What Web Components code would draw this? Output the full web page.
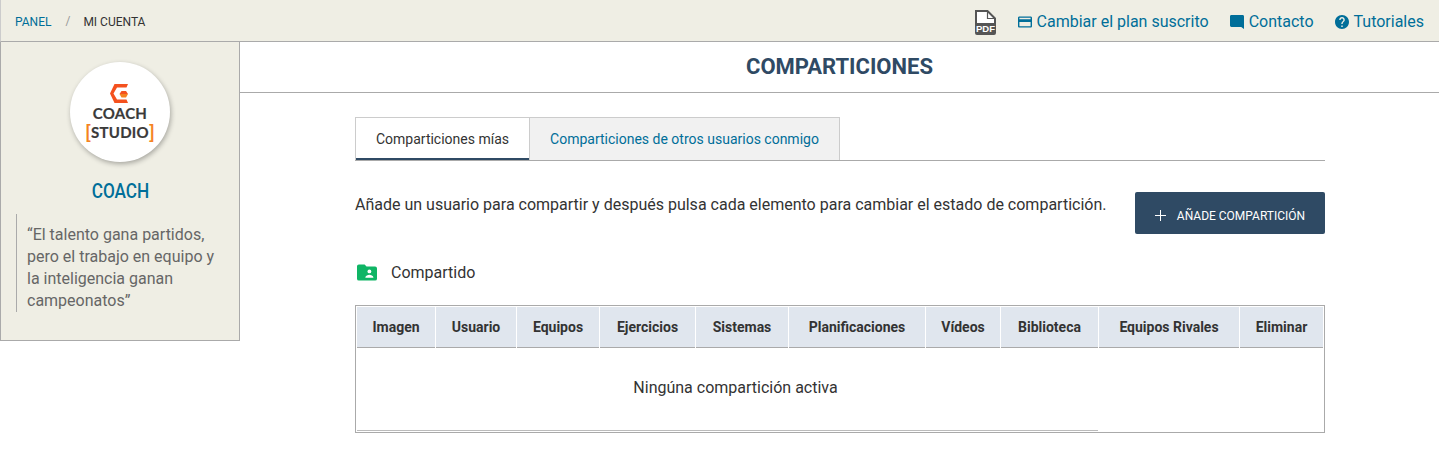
<!DOCTYPE html>
<html lang="es">
<head>
<meta charset="utf-8">
<title>Comparticiones</title>
<style>
  html, body { margin: 0; padding: 0; background: #fff; }
  body { font-family: Roboto, "Liberation Sans", sans-serif; color: #333; overflow: hidden; }
</style>
</head>
<body>
<app-page></app-page>
<script>
class AppTopbar extends HTMLElement {
  constructor() {
    super();
    this.attachShadow({ mode: "open" });
    this.shadowRoot.innerHTML = `
      <style>
        :host { display: flex; justify-content: space-between; align-items: center; box-sizing: border-box; height: 42px; background: #efeee4; border-bottom: 1px solid #aaa; border-left: 1px solid #ccc; padding: 0 15px 0 14px; }
        .crumbs { display: flex; align-items: center; font-size: 12px; color: #333; padding-top: 3px; }
        .crumbs a { color: #006e99; }
        .crumbs i { font-style: normal; color: #999; margin: -3px 13px 0 14px; }
        .links { display: flex; align-items: center; font-size: 16px; color: #006e99; }
        .links a { display: flex; align-items: center; padding-top: 2px; }
        .pdf { margin-right: 22px; }
        .links .pdf { padding-top: 4px; }
        .pdf svg { display: block; }
        .card { margin-right: 21px; gap: 5px; }
        .chat { margin-right: 21px; gap: 5px; }
        .help { gap: 5px; }
      </style>
      <div class="crumbs"><a>PANEL</a><i>/</i><span>MI CUENTA</span></div>
      <div class="links">
        <a class="pdf"><svg width="21" height="25" viewBox="0 0 21 25">
          <path d="M1 1h11.5L20 8.5V23a1 1 0 0 1-1 1H2a1 1 0 0 1-1-1z" fill="#fff" stroke="#555" stroke-width="2"/>
          <path d="M12.5 1v7.5H20" fill="none" stroke="#555" stroke-width="1.2"/>
          <rect x="1" y="13" width="19" height="11" fill="#555"/>
          <text x="10.5" y="22.2" text-anchor="middle" font-family="Liberation Sans, sans-serif" font-size="9.5" font-weight="700" fill="#fff">PDF</text>
        </svg></a>
        <a class="card"><svg width="14" height="14" viewBox="2 2 20 20" fill="#006e99"><path d="M20 4H4c-1.11 0-1.99.89-1.99 2L2 18c0 1.11.89 2 2 2h16c1.11 0 2-.89 2-2V6c0-1.11-.89-2-2-2zm0 14H4v-6h16v6zm0-10H4V6h16v2z"/></svg>Cambiar el plan suscrito</a>
        <a class="chat"><svg width="14" height="14" viewBox="2 2 20 20" fill="#006e99"><path d="M20 2H4c-1.1 0-2 .9-2 2v13c0 1.1.9 2 2 2h14l4 3V4c0-1.1-.9-2-2-2z"/></svg>Contacto</a>
        <a class="help"><svg width="14" height="14" viewBox="2 2 20 20" fill="#006e99"><path d="M12 2C6.48 2 2 6.48 2 12s4.48 10 10 10 10-4.48 10-10S17.52 2 12 2zm1 17h-2v-2h2v2zm2.07-7.75-.9.92C13.45 12.9 13 13.5 13 15h-2v-.5c0-1.1.45-2.1 1.17-2.83l1.24-1.26c.37-.36.59-.86.59-1.41 0-1.1-.9-2-2-2s-2 .9-2 2H8c0-2.21 1.79-4 4-4s4 1.79 4 4c0 .88-.36 1.68-.93 2.25z"/></svg>Tutoriales</a>
      </div>`;
  }
}

class ProfileSidebar extends HTMLElement {
  constructor() {
    super();
    this.attachShadow({ mode: "open" });
    this.shadowRoot.innerHTML = `
      <style>
        :host { display: flex; flex-direction: column; align-items: center; box-sizing: border-box; flex: none; width: 240px; height: 299px; background: #efeee4; border: 1px solid #aaa; border-top: 0; padding-top: 20px; }
        .logo { box-sizing: border-box; width: 100px; height: 100px; border-radius: 50%; background: #fff; box-shadow: 1px 2px 5px rgba(0,0,0,.3); display: flex; flex-direction: column; align-items: center; padding-top: 22px; font-family: Lato, "Open Sans", sans-serif; font-weight: 700; font-size: 15px; letter-spacing: .25px; line-height: 19px; color: #3a3a3a; -webkit-text-stroke: .2px #3a3a3a; }
        .logo svg { display: block; margin-bottom: 1px; }
        .logo b { color: #f58220; -webkit-text-stroke: .2px #f58220; font-weight: 700; font-size: 18px; line-height: 0; vertical-align: -1px; }
        h2 { margin: 19px 0 0; font-size: 20px; font-weight: 500; line-height: 20px; color: #006e99; transform: scaleX(.86); }
        blockquote { align-self: flex-start; box-sizing: border-box; margin: 13px 0 0 15px; width: 208px; padding: 10px 0 0 10px; border-left: 1px solid #aaa; font-size: 16px; line-height: 22px; height: 98px; color: #666; }
      </style>
      <div class="logo">
        <svg width="20" height="19" viewBox="0 0 20 19"><path d="M4.5 0H18l-1.5 3.5H7L3.5 9.5 7 15.5h9.5L18 19H4.5L0 9.5z" fill="#f4511e"/><path d="M9.5 10l2-3H16l2 3z" fill="#f4511e"/><path d="M9.5 10H18l-2 3.5h-4.5z" fill="#f58220"/></svg>
        <span>COACH</span>
        <span><b>[</b>STUDIO<b>]</b></span>
      </div>
      <h2>COACH</h2>
      <blockquote><slot></slot></blockquote>`;
  }
}

class ShareTabs extends HTMLElement {
  constructor() {
    super();
    this.attachShadow({ mode: "open" });
    this.shadowRoot.innerHTML = `
      <style>
        :host { display: flex; box-sizing: border-box; height: 44px; border-bottom: 1px solid #aaa; font-size: 14px; }
        div { box-sizing: border-box; height: 43px; display: flex; align-items: center; justify-content: center; border: 1px solid #ccc; border-bottom: 0; }
        .on { width: 174px; color: #333; border-right: 0; box-shadow: inset 0 -2px 0 #2f4a64; padding-bottom: 1px; }
        .off { width: 311px; color: #006e99; background: #f1f1f1; padding-bottom: 1px; }
      </style>
      <div class="on">Comparticiones mías</div>
      <div class="off">Comparticiones de otros usuarios conmigo</div>`;
  }
}

class AddButton extends HTMLElement {
  constructor() {
    super();
    this.attachShadow({ mode: "open" });
    this.shadowRoot.innerHTML = `
      <style>
        :host { display: flex; align-items: center; justify-content: center; gap: 11px; box-sizing: border-box; flex: none; width: 190px; height: 42px; padding-top: 4px; background: #2f4a64; border-radius: 2px; color: #fff; font-size: 12px; font-weight: 400; }
        svg { display: block; }
        span { margin-top: 2px; }
      </style>
      <svg width="11" height="11" viewBox="0 0 11 11"><path d="M5 0h1v5h5v1H6v5H5V6H0V5h5z" fill="#fff"/></svg>
      <span><slot></slot></span>`;
  }
}

class ShareTable extends HTMLElement {
  constructor() {
    super();
    this.attachShadow({ mode: "open" });
    const cols = [["Imagen", 78], ["Usuario", 80], ["Equipos", 82], ["Ejercicios", 95], ["Sistemas", 92], ["Planificaciones", 136], ["Vídeos", 74], ["Biblioteca", 97], ["Equipos Rivales", 140], ["Eliminar", 83]];
    this.shadowRoot.innerHTML = `
      <style>
        :host { display: block; box-sizing: border-box; height: 128px; border: 1px solid #aaa; padding: 1px; }
        .head { display: flex; gap: 1px; }
        .head div { box-sizing: border-box; height: 41px; display: flex; align-items: center; justify-content: center; background: #e0e6ee; border-bottom: 1px solid #aaa; font-size: 14px; font-weight: 700; color: #333; }
        .empty { box-sizing: border-box; width: 741px; height: 83px; display: flex; align-items: center; justify-content: center; padding-left: 16px; padding-bottom: 4px; border-bottom: 1px solid #bbb; font-size: 16px; color: #333; }
      </style>
      <div class="head">${cols.map(c => `<div style="width:${c[1]}px">${c[0]}</div>`).join("")}</div>
      <div class="empty"><slot></slot></div>`;
  }
}

class AppPage extends HTMLElement {
  constructor() {
    super();
    this.attachShadow({ mode: "open" });
    this.shadowRoot.innerHTML = `
      <style>
        :host { display: block; }
        .body { display: flex; }
        main { flex: 1; min-width: 0; }
        h1 { box-sizing: border-box; margin: 0; height: 51px; border-bottom: 1px solid #aaa; display: flex; align-items: center; justify-content: center; font-size: 22px; font-weight: 700; color: #2f4a64; padding-bottom: 1px; }
        .content { width: 970px; margin: 24px 0 0 115px; }
        .intro { display: flex; justify-content: space-between; margin-top: 31px; font-size: 16px; color: #333; }
        .intro p { margin: 3px 0 0; line-height: 19px; }
        .shared { display: flex; align-items: center; gap: 14px; margin: 28px 0 23px 2px; height: 20px; font-size: 16px; color: #333; }
        .shared svg { display: block; }
      </style>
      <app-topbar></app-topbar>
      <div class="body">
        <profile-sidebar>“El talento gana partidos, pero el trabajo en equipo y la inteligencia ganan campeonatos”</profile-sidebar>
        <main>
          <h1>COMPARTICIONES</h1>
          <div class="content">
            <share-tabs></share-tabs>
            <div class="intro">
              <p>Añade un usuario para compartir y después pulsa cada elemento para cambiar el estado de compartición.</p>
              <add-button>AÑADE COMPARTICIÓN</add-button>
            </div>
            <div class="shared">
              <svg width="20" height="17" viewBox="0 0 21 17"><path d="M2 0h6l2 2.2h9a2 2 0 0 1 2 2V15a2 2 0 0 1-2 2H2a2 2 0 0 1-2-2V2a2 2 0 0 1 2-2z" fill="#0fb565"/><circle cx="13" cy="7.4" r="2" fill="#fff"/><path d="M8.8 13.4c0-1.7 2.8-2.6 4.2-2.6s4.2.9 4.2 2.6v.6H8.8z" fill="#fff"/></svg>
              <span>Compartido</span>
            </div>
            <share-table>Ningúna compartición activa</share-table>
          </div>
        </main>
      </div>`;
  }
}

customElements.define("app-topbar", AppTopbar);
customElements.define("profile-sidebar", ProfileSidebar);
customElements.define("share-tabs", ShareTabs);
customElements.define("add-button", AddButton);
customElements.define("share-table", ShareTable);
customElements.define("app-page", AppPage);
</script>
</body>
</html>
